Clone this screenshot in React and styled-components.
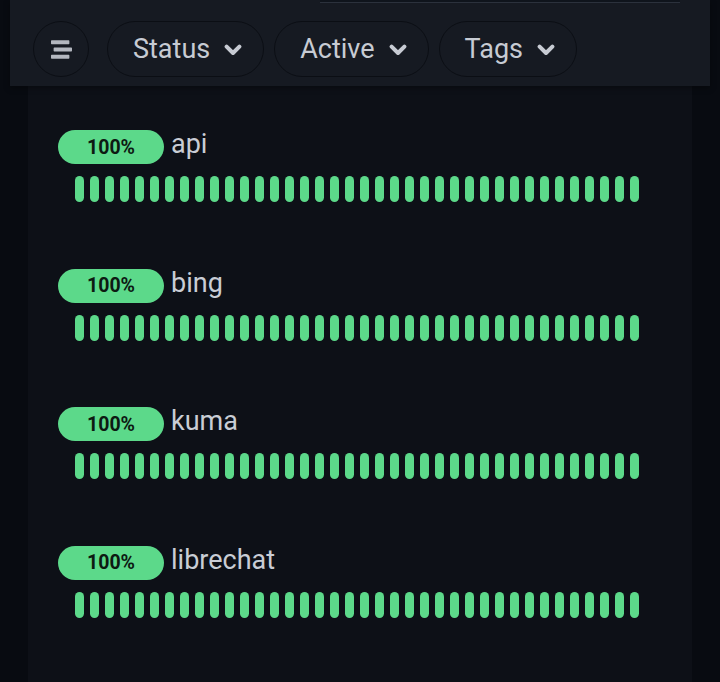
import React from "react";
import styled, { createGlobalStyle } from "styled-components";
import { FaStream } from "react-icons/fa";

const GlobalStyle = createGlobalStyle`
  html, body {
    margin: 0;
    padding: 0;
    background-color: #080b11;
    font-family: Roboto, "Liberation Sans", sans-serif;
    overflow: hidden;
  }
`;

const Page = styled.div`
  height: 682px;
  display: flex;
  flex-direction: column;
`;

const Header = styled.div`
  margin: 0 10px;
  height: 86px;
  background-color: #161a22;
  display: flex;
  flex-direction: column;
  box-shadow: 0 2px 6px rgba(0, 0, 0, 0.35);
  position: relative;
  z-index: 1;
`;

const SearchStub = styled.div`
  align-self: flex-end;
  margin-right: 30px;
  width: 360px;
  height: 2px;
  background-color: #0f141c;
  border-bottom: 1px solid #2b313c;
`;

const FilterRow = styled.div`
  display: flex;
  align-items: center;
  gap: 10px;
  padding: 18px 0 0 23px;
`;

const MenuButton = styled.div`
  width: 54px;
  height: 54px;
  border-radius: 50%;
  border: 1px solid #0b0e14;
  display: flex;
  align-items: center;
  justify-content: center;
  margin-right: 8px;
  color: #b3b7bf;
  font-size: 21px;
`;

const Pill = styled.div`
  height: 54px;
  border-radius: 28px;
  border: 1px solid #0b0e14;
  display: flex;
  align-items: center;
  gap: 14px;
  padding: 0 21px 0 25px;
  color: #c7cbd3;
  font-size: 27px;
`;

const Chevron = styled.svg`
  width: 18px;
  height: 12px;
  margin-top: 2px;
`;

const Content = styled.div`
  flex: 1;
  margin: 0 28px;
  background-color: #0d1017;
  padding: 44px 0 0 30px;
  display: flex;
  flex-direction: column;
  gap: 66.5px;
`;

const Monitor = styled.div`
  display: flex;
  flex-direction: column;
  gap: 12px;
`;

const TitleRow = styled.div`
  display: flex;
  align-items: center;
  gap: 7px;
`;

const Badge = styled.div`
  width: 106px;
  height: 34px;
  border-radius: 17px;
  background-color: #5cd98a;
  color: #0d1a12;
  font-size: 19.5px;
  font-weight: 700;
  display: flex;
  align-items: center;
  justify-content: center;
`;

const Name = styled.div`
  color: #c9cdd5;
  font-size: 27px;
  line-height: 1;
  margin-top: -5px;
`;

const Beats = styled.div`
  display: flex;
  gap: 6px;
  padding-left: 17px;
`;

const Beat = styled.div`
  width: 9px;
  height: 26px;
  border-radius: 5px;
  background-color: ${(p) => (p.down ? "#dc3545" : "#5cd98a")};
`;

const monitors = ["api", "bing", "kuma", "librechat"];
const filters = ["Status", "Active", "Tags"];

export default function App() {
  return (
    <>
      <GlobalStyle />
      <Page>
        <Header>
          <SearchStub />
          <FilterRow>
            <MenuButton>
              <FaStream />
            </MenuButton>
            {filters.map((f) => (
              <Pill key={f}>
                {f}
                <Chevron viewBox="0 0 18 12">
                  <path
                    d="M2.6 2.6 L9 9 L15.4 2.6"
                    fill="none"
                    stroke="#c7cbd3"
                    strokeWidth="4"
                    strokeLinecap="round"
                    strokeLinejoin="round"
                  />
                </Chevron>
              </Pill>
            ))}
          </FilterRow>
        </Header>
        <Content>
          {monitors.map((m) => (
            <Monitor key={m}>
              <TitleRow>
                <Badge>100%</Badge>
                <Name>{m}</Name>
              </TitleRow>
              <Beats>
                {Array.from({ length: 38 }).map((_, i) => (
                  <Beat key={i} />
                ))}
              </Beats>
            </Monitor>
          ))}
        </Content>
      </Page>
    </>
  );
}
